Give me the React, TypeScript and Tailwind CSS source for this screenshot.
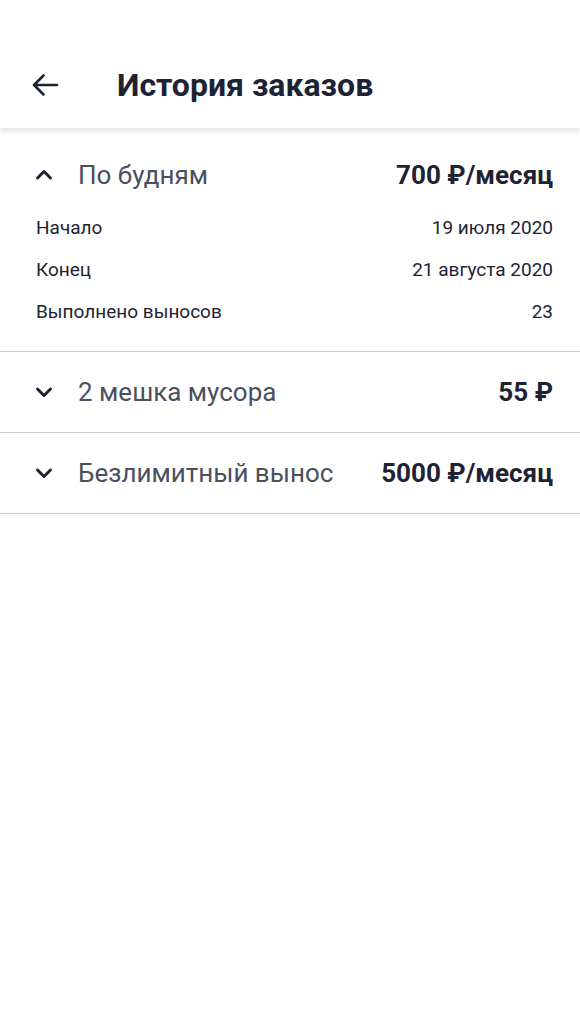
const font = { fontFamily: 'Roboto, "Noto Sans", sans-serif' };

function Chevron({ up }: { up?: boolean }) {
  return (
    <svg width="18" height="12" viewBox="0 0 18 12" className={up ? 'rotate-180' : ''}>
      <path d="M2.5 3 9 9.5 15.5 3" fill="none" stroke="#1e2333" strokeWidth="3" strokeLinecap="round" strokeLinejoin="round" />
    </svg>
  );
}

function Row({ title, price, open }: { title: string; price: string; open?: boolean }) {
  return (
    <div className="flex h-[80px] items-center pl-[35px] pr-[27px]">
      <Chevron up={open} />
      <span className="ml-[25px] text-[26px] text-[#4a5060]">{title}</span>
      <span className="ml-auto text-[26px] font-bold text-[#1e2333]">{price}</span>
    </div>
  );
}

export default function App() {
  const details = [
    ['Начало', '19 июля 2020'],
    ['Конец', '21 августа 2020'],
    ['Выполнено выносов', '23'],
  ];

  return (
    <div className="min-h-[1031px] w-[580px] bg-white" style={font}>
      {/* Header */}
      <header className="relative z-10 flex h-[128px] items-center pt-[42px] pl-[31px] shadow-[0_3px_6px_rgba(0,0,0,0.12)]">
        <svg width="28" height="24" viewBox="0 0 28 24">
          <path d="M26 12H3M12.5 2.5 3 12l9.5 9.5" fill="none" stroke="#1e2333" strokeWidth="2.6" strokeLinecap="round" strokeLinejoin="round" />
        </svg>
        <h1 className="ml-[58px] text-[32px] font-bold text-[#1e2333]">История заказов</h1>
      </header>

      {/* Expanded order */}
      <div className="border-b border-[#c9ccd3] pt-[7px] pb-[26px]">
        <Row title="По будням" price="700 ₽/месяц" open />
        <div className="flex flex-col gap-4 pl-[36px] pr-[27px] text-[19px] text-[#1e2333]">
          {details.map(([k, v]) => (
            <div key={k} className="flex h-[26px] items-center justify-between">
              <span>{k}</span>
              <span>{v}</span>
            </div>
          ))}
        </div>
      </div>

      <div className="border-b border-[#c9ccd3]">
        <Row title="2 мешка мусора" price="55 ₽" />
      </div>
      <div className="border-b border-[#c9ccd3]">
        <Row title="Безлимитный вынос" price="5000 ₽/месяц" />
      </div>
    </div>
  );
}
